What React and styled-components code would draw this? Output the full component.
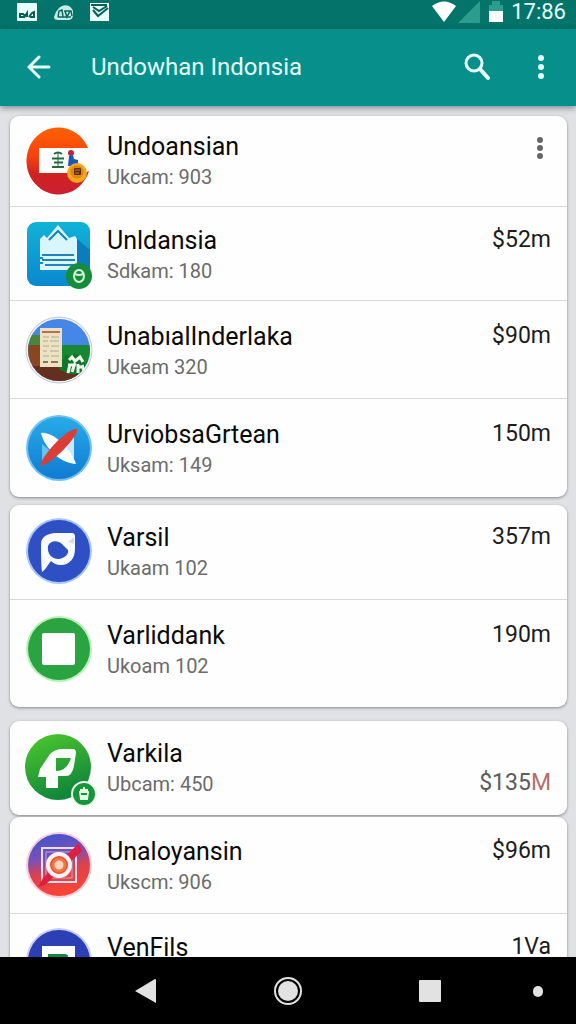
import React from 'react'
import styled, { createGlobalStyle } from 'styled-components';

const GlobalStyle = createGlobalStyle`
  * {
    box-sizing: border-box;
  }
  body {
    margin: 0;
    background: #dfe1e4;
    font-family: Roboto, "Liberation Sans", sans-serif;
  }
`;

const Screen = styled.div`
  display: flex;
  flex-direction: column;
  height: 100vh;
`;

const StatusBar = styled.div`
  display: flex;
  align-items: center;
  flex: none;
  height: 29px;
  padding: 0 10px 5px 16px;
  background: #04746b;
  color: #e6fffb;
`;

const StatusGroup = styled.div`
  display: flex;
  align-items: center;
  gap: ${props => props.$gap};
  margin-left: ${props => (props.$right ? 'auto' : '0')};
`;

const Clock = styled.time`
  font-size: 22px;
  line-height: 24px;
`;

const AppBar = styled.header`
  display: flex;
  align-items: center;
  gap: 15px;
  flex: none;
  height: 77px;
  padding: 0 14px 2px;
  background: #078f8b;
  color: #e6fffb;
  box-shadow: 0 2px 6px rgba(0, 0, 0, 0.4);
  z-index: 1;
`;

const Title = styled.h1`
  flex: 1;
  margin: 0;
  padding-left: 12px;
  font-size: 24px;
  font-weight: 400;
  line-height: 30px;
`;

const IconButton = styled.button`
  display: flex;
  align-items: center;
  justify-content: center;
  flex: none;
  width: ${props => props.$width || '50px'};
  height: 48px;
  padding: 0;
  border: none;
  background: none;
  color: inherit;
  cursor: pointer;
`;

const Content = styled.main`
  flex: 1;
  min-height: 0;
  padding: 10px 9px 0 10px;
  overflow-y: auto;
  scrollbar-width: none;
`;

const Card = styled.ul`
  margin: 0 0 ${props => props.$gap || '0'};
  padding: 0;
  list-style: none;
  border-radius: 9px;
  background: #fefefe;
  box-shadow: 0 1px 3px rgba(0, 0, 0, 0.4);
`;

const RowItem = styled.li`
  display: flex;
  align-items: center;
  gap: 14px;
  padding: ${props => props.$top} 16px ${props => props.$bottom} 15px;

  & + & {
    border-top: 1px solid #d6d8da;
  }
`;

const AppIcon = styled.svg`
  flex: none;
  width: 68px;
  height: 68px;
  overflow: visible;
`;

const Texts = styled.div`
  flex: 1;
  min-width: 0;
  padding-top: 3px;
`;

const Name = styled.h2`
  margin: 0;
  font-size: 25px;
  font-weight: 400;
  line-height: 30px;
  color: #0a0a0a;
`;

const Sub = styled.p`
  margin: 0;
  font-size: 20px;
  line-height: 30px;
  color: #6c6c6c;
`;

const Amount = styled.span`
  align-self: ${props => (props.$low ? 'flex-end' : 'flex-start')};
  padding: 5px 0 3px;
  font-size: 23px;
  line-height: 30px;
  color: ${props => (props.$low ? '#5c5c5c' : '#1c1c1c')};
`;

const Unit = styled.span`
  color: #b4706c;
`;

const MoreButton = styled(IconButton)`
  align-self: flex-start;
  height: 44px;
  margin-right: -14px;
  color: #666666;
`;

const NavBar = styled.nav`
  display: grid;
  grid-template-columns: 141fr 144fr 139fr 76fr;
  align-items: center;
  justify-items: center;
  flex: none;
  height: 67px;
  padding-left: 13%;
  background: #000000;
  color: #e2e2e2;
  z-index: 1;
`;

function Dots({ r, gap }) {
  return (
    <svg width="8" height="28" viewBox="0 0 8 28" fill="currentColor">
      <circle cx="4" cy={14 - gap} r={r} />
      <circle cx="4" cy="14" r={r} />
      <circle cx="4" cy={14 + gap} r={r} />
    </svg>
  )
}

function FlagIcon() {
  return (
    <AppIcon viewBox="0 0 68 68">
      <defs>
        <linearGradient id="flag" x1="0" y1="0" x2="0" y2="1">
          <stop offset="0" stopColor="#ff6200" />
          <stop offset="0.45" stopColor="#f4400f" />
          <stop offset="0.7" stopColor="#cf2222" />
          <stop offset="1" stopColor="#cc1f31" />
        </linearGradient>
      </defs>
      <path d="M63 22A32 33.500 0 1 0 64 45L60 42V22Z" fill="url(#flag)" />
      <path d="M14 22H66V44L60 47H14Z" fill="#fffdfb" />
      <path d="M29 28Q33 25 37 28M27 32.500H39M29 36.500H38M27 41H39" stroke="#1f6b42" strokeWidth="2" fill="none" />
      <path d="M33 27V42" stroke="#1f6b42" />
      <circle cx="46" cy="27" r="3" fill="#c3213a" />
      <path d="M44 30L48 29L49 33L53 34V40H43Z" fill="#1a58b8" />
      <circle cx="52" cy="47" r="10" fill="#f3a51c" />
      <circle cx="52" cy="46" r="6.500" fill="#e0860c" />
      <rect x="49" y="42" width="7" height="7" rx="1" fill="#5d2c12" />
      <path d="M50 44H55M50 47H54" stroke="#c8791a" />
    </AppIcon>
  )
}

function CrownIcon() {
  return (
    <AppIcon viewBox="0 0 68 68">
      <defs>
        <linearGradient id="crown" x1="0" y1="0" x2="0" y2="1">
          <stop offset="0" stopColor="#10b3d6" />
          <stop offset="1" stopColor="#0b87cf" />
        </linearGradient>
      </defs>
      <rect x="2" y="2" width="63" height="64" rx="9" fill="url(#crown)" />
      <path d="M51 18L65 30V58L52 50Z" fill="#0a7dbd" />
      <path d="M15 19L19 15L22 18L33 5L44 18L50 16L52 19V50H15Z" fill="#d9f6fd" />
      <path d="M24 20L33 11L42 20" stroke="#1284b8" strokeWidth="2" fill="none" />
      <path d="M17 35H49M17 40H50M20 45H50" stroke="#2382b8" strokeWidth="2" />
      <path d="M15 38H18M15 43H18" stroke="#0d8bcb" strokeWidth="2" />
      <circle cx="54" cy="56" r="13" fill="#158b3c" />
      <ellipse cx="54" cy="56" rx="5" ry="6" fill="none" stroke="#d4f3d9" strokeWidth="2" />
      <path d="M50 54Q54 56 58 54" stroke="#d4f3d9" strokeWidth="2" fill="none" />
    </AppIcon>
  )
}

function FieldIcon() {
  return (
    <AppIcon viewBox="0 0 68 68">
      <clipPath id="field">
        <circle cx="34" cy="34" r="31" />
      </clipPath>
      <circle cx="34" cy="34" r="33" fill="#eef0f6" stroke="#c3c8cf" />
      <g clipPath="url(#field)">
        <rect width="68" height="68" fill="#4686e6" />
        <rect y="19" width="16" height="12" fill="#47863c" />
        <rect x="34" y="29" width="34" height="40" fill="#178732" />
        <rect y="29" width="35" height="22" fill="#884621" />
        <path d="M0 50H40L54 58V68H0Z" fill="#642f1e" />
        <path d="M32 48L38 44L41 38L46 41L50 37L56 41L60 48L58 58H44L35 54Z" fill="#12752a" />
      </g>
      <rect x="15" y="12" width="22" height="39" fill="#ece1c3" />
      <path d="M17 16H35" stroke="#b67051" strokeWidth="2" />
      <path d="M18 21H24M26 21H34M18 25H23M25 25H34M18 30H24M26 30H34M18 35H22M25 35H34M18 40H24M26 40H34" stroke="#b5aa90" />
      <path d="M18 46H23M26 46H33" stroke="#7c7863" strokeWidth="2" />
      <path d="M44 44L47 41L50 45L55 41L58 46M43 49H48M45 48L43 57M50 47L47 56M53 48V57M57 49L59 55M54 51H59" stroke="#eef9ea" strokeWidth="3" fill="none" />
    </AppIcon>
  )
}

function CompassIcon() {
  return (
    <AppIcon viewBox="0 0 68 68">
      <defs>
        <linearGradient id="compass" x1="0" y1="0" x2="0" y2="1">
          <stop offset="0" stopColor="#28abe8" />
          <stop offset="1" stopColor="#107bd3" />
        </linearGradient>
      </defs>
      <circle cx="34" cy="34" r="33" fill="#6fc0f3" />
      <circle cx="34" cy="34" r="31" fill="url(#compass)" />
      <path d="M17 30L29 40L17 50Z" fill="#63c4f3" />
      <path d="M49 20V48L35 36Z" fill="#c9e9f9" />
      <path d="M16 19C26 17 45 32 51 50C38 50 20 36 16 19Z" fill="#f8fdff" />
      <path d="M52 15C54 22 27 50 15 52C16 43 41 14 52 15Z" fill="#dc3d36" />
    </AppIcon>
  )
}

function PinIcon() {
  return (
    <AppIcon viewBox="0 0 68 68">
      <circle cx="34" cy="34" r="33" fill="#a9c6f5" />
      <circle cx="34" cy="34" r="31" fill="#2e50c4" />
      <path fillRule="evenodd" d="M17 55C16 45 16 34 16 27C16 20 22 17 29 16H47Q50 16 50 20V32C50 42 44 48 36 48C31 48 28 46 26 44C24 46 22 51 17 55ZM23 29C22 36 26 42 34 42C40 41 44 37 43 33L37 27C33 23 25 23 23 29Z" fill="#f8fbff" />
      <path d="M49 20L43 25L49 27Z" fill="#dedbe2" />
    </AppIcon>
  )
}

function SquareIcon() {
  return (
    <AppIcon viewBox="0 0 68 68">
      <circle cx="34" cy="34" r="33" fill="#b8f0b7" />
      <circle cx="34" cy="34" r="31" fill="#2aa440" />
      <rect x="17" y="18" width="33" height="32" rx="2" fill="#ffffff" />
    </AppIcon>
  )
}

function LeafIcon() {
  return (
    <AppIcon viewBox="0 0 68 68">
      <defs>
        <linearGradient id="leaf" x1="0" y1="0" x2="0.4" y2="1">
          <stop offset="0" stopColor="#50cb2c" />
          <stop offset="1" stopColor="#11873a" />
        </linearGradient>
      </defs>
      <circle cx="33" cy="34" r="33" fill="url(#leaf)" />
      <path fillRule="evenodd" d="M35 16H48Q51 16 51 20L49 33Q47 43 41 43H33V55H21V44H13L15 36L25 21Q29 17 35 16ZM31 25V38Q42 38 46 25Z" fill="#fbfffa" />
      <circle cx="59" cy="61" r="12" fill="#17953c" stroke="#e9f9e8" strokeWidth="2" />
      <path d="M55 59H63L62 66H56ZM55 57H63M59 54V57" fill="#e6fae5" stroke="#e6fae5" strokeWidth="2" strokeLinejoin="round" />
      <path d="M56 61H62" stroke="#17953c" strokeWidth="2" />
    </AppIcon>
  )
}

function TargetIcon() {
  return (
    <AppIcon viewBox="0 0 68 68">
      <defs>
        <linearGradient id="target" x1="0.3" y1="0" x2="0.55" y2="1">
          <stop offset="0" stopColor="#3f55cc" />
          <stop offset="0.35" stopColor="#7850b8" />
          <stop offset="0.6" stopColor="#df414c" />
          <stop offset="1" stopColor="#fb4532" />
        </linearGradient>
      </defs>
      <circle cx="34" cy="34" r="33" fill="#f6ccdd" />
      <circle cx="34" cy="34" r="31" fill="url(#target)" />
      <rect x="17" y="17" width="34" height="34" fill="none" stroke="#e6dff5" strokeWidth="2" />
      <rect x="21" y="21" width="26" height="26" fill="none" stroke="#b9a9de" />
      <path d="M54 12L57 20L20 54L13 56L18 47Z" fill="#dd1f40" />
      <circle cx="34" cy="34" r="11" fill="#e94b30" stroke="#fff2f0" strokeWidth="4" />
      <circle cx="34" cy="34" r="6" fill="#fbd5c6" stroke="#f0773f" strokeWidth="3" />
    </AppIcon>
  )
}

function FileIcon() {
  return (
    <AppIcon viewBox="0 0 68 68">
      <circle cx="34" cy="34" r="33" fill="#c8cdf2" />
      <circle cx="34" cy="34" r="31" fill="#2c3fb4" />
      <rect x="17" y="19" width="33" height="32" fill="#ffffff" />
      <path d="M23 27H40Q43 27 43 30V44H23Z" fill="#0f8a4a" />
    </AppIcon>
  )
}

function Row(props) {
  const Icon = props.icon

  return (
    <RowItem $top={props.top} $bottom={props.bottom}>
      <Icon />
      <Texts>
        <Name>{props.name}</Name>
        <Sub>{props.sub}</Sub>
      </Texts>
      {props.amount && (
        <Amount $low={props.low}>
          {props.amount}
          {props.unit && <Unit>{props.unit}</Unit>}
        </Amount>
      )}
      {props.menu && (
        <MoreButton type="button" aria-label="More">
          <Dots r={3} gap={8} />
        </MoreButton>
      )}
    </RowItem>
  )
}

const cards = [
  {
    gap: '8px',
    rows: [
      { name: 'Undoansian', sub: 'Ukcam: 903', icon: FlagIcon, menu: true, top: '10px', bottom: '12px' },
      { name: 'Unldansia', sub: 'Sdkam: 180', icon: CrownIcon, amount: '$52m', top: '13px', bottom: '12px' },
      { name: 'UnabıalInderlaka', sub: 'Ukeam 320', icon: FieldIcon, amount: '$90m', top: '15px', bottom: '14px' },
      { name: 'UrviobsaGrtean', sub: 'Uksam: 149', icon: CompassIcon, amount: '150m', top: '15px', bottom: '15px' },
    ],
  },
  {
    gap: '14px',
    rows: [
      { name: 'Varsil', sub: 'Ukaam 102', icon: PinIcon, amount: '357m', top: '12px', bottom: '14px' },
      { name: 'Varliddank', sub: 'Ukoam 102', icon: SquareIcon, amount: '190m', top: '15px', bottom: '24px' },
    ],
  },
  {
    gap: '2px',
    rows: [
      { name: 'Varkila', sub: 'Ubcam: 450', icon: LeafIcon, amount: '$135', unit: 'M', low: true, top: '12px', bottom: '14px' },
    ],
  },
  {
    rows: [
      { name: 'Unaloyansin', sub: 'Ukscm: 906', icon: TargetIcon, amount: '$96m', top: '14px', bottom: '14px' },
      { name: 'VenFils', sub: 'Ukoam 102', icon: FileIcon, amount: '1Va', top: '13px', bottom: '15px' },
    ],
  },
]

function App() {
  return (
    <Screen>
      <GlobalStyle />
      <StatusBar>
        <StatusGroup $gap="16px">
          <svg width="21" height="20" viewBox="0 0 21 20">
            <rect x="1" y="1" width="20" height="18" rx="1" fill="#e6fffb" />
            <path d="M4 15V12L7 12L9 14L11 11V15M13 15L16 11L18 10V15M3 15H9M14 15H19" stroke="#0d5d56" strokeWidth="2" fill="none" />
          </svg>
          <svg width="21" height="20" viewBox="0 0 21 20">
            <path d="M1 15Q2 10 6 6Q10 2 16 4Q21 7 20 13Q20 18 15 18H5Q1 18 1 15Z" fill="#c5eee8" />
            <path d="M5 15L6 9L9 8L10 15M12 9L14 15L17 9M5 15H18M11 9H18L19 14" stroke="#11665f" strokeWidth="1.500" fill="none" />
          </svg>
          <svg width="20" height="20" viewBox="0 0 20 20">
            <rect x="0" y="1" width="19" height="18" fill="#e6fffb" />
            <path d="M1 3H17M3 5L9 9L17 4M3 8L8 14L18 6" stroke="#0d5d56" strokeWidth="2" fill="none" />
          </svg>
        </StatusGroup>
        <StatusGroup $gap="8px" $right>
          <svg width="50" height="22" viewBox="0 0 50 22">
            <path d="M1 5Q13 -4 25 5L13 21Z" fill="#ffffff" />
            <path d="M49 0V22H27Z" fill="#2a9d8c" />
          </svg>
          <svg width="14" height="22" viewBox="0 0 14 22">
            <path d="M3 0H11V4H14V11H0V4H3Z" fill="#2a9d8c" />
            <rect y="10" width="14" height="11" fill="#ffffff" />
          </svg>
          <Clock>17:86</Clock>
        </StatusGroup>
      </StatusBar>
      <AppBar>
        <IconButton type="button" aria-label="Back">
          <svg width="24" height="24" viewBox="0 0 24 24" fill="none" stroke="currentColor" strokeWidth="3" strokeLinecap="round">
            <path d="M22 12H2M12 2L2 12L12 22" />
          </svg>
        </IconButton>
        <Title>Undowhan Indonsia</Title>
        <IconButton type="button" aria-label="Search" $width="56px">
          <svg width="28" height="28" viewBox="0 0 28 28" fill="none" stroke="currentColor" strokeLinecap="round">
            <circle cx="11" cy="10" r="8" strokeWidth="3" />
            <path d="M17 16L25 25" strokeWidth="4" />
          </svg>
        </IconButton>
        <IconButton type="button" aria-label="Menu" $width="42px">
          <Dots r={3} gap={9} />
        </IconButton>
      </AppBar>
      <Content>
        {cards.map((card, i) => (
          <Card key={i} $gap={card.gap}>
            {card.rows.map(row => (
              <Row key={row.name} {...row} />
            ))}
          </Card>
        ))}
      </Content>
      <NavBar>
        <IconButton type="button" aria-label="Go back">
          <svg width="22" height="26" viewBox="0 0 22 26" fill="currentColor">
            <path d="M0 13L20 1Q21 1 21 2V25Z" />
          </svg>
        </IconButton>
        <IconButton type="button" aria-label="Home">
          <svg width="30" height="30" viewBox="0 0 30 30">
            <circle cx="15" cy="15" r="13" fill="none" stroke="currentColor" strokeWidth="2" />
            <circle cx="15" cy="15" r="10" fill="currentColor" />
          </svg>
        </IconButton>
        <IconButton type="button" aria-label="Recent apps">
          <svg width="22" height="22" viewBox="0 0 22 22" fill="currentColor">
            <rect width="22" height="22" rx="1" />
          </svg>
        </IconButton>
        <IconButton type="button" aria-label="Options">
          <svg width="10" height="12" viewBox="0 0 10 12" fill="currentColor">
            <rect y="1" width="10" height="11" rx="5" />
          </svg>
        </IconButton>
      </NavBar>
    </Screen>
  )
}

export default App
